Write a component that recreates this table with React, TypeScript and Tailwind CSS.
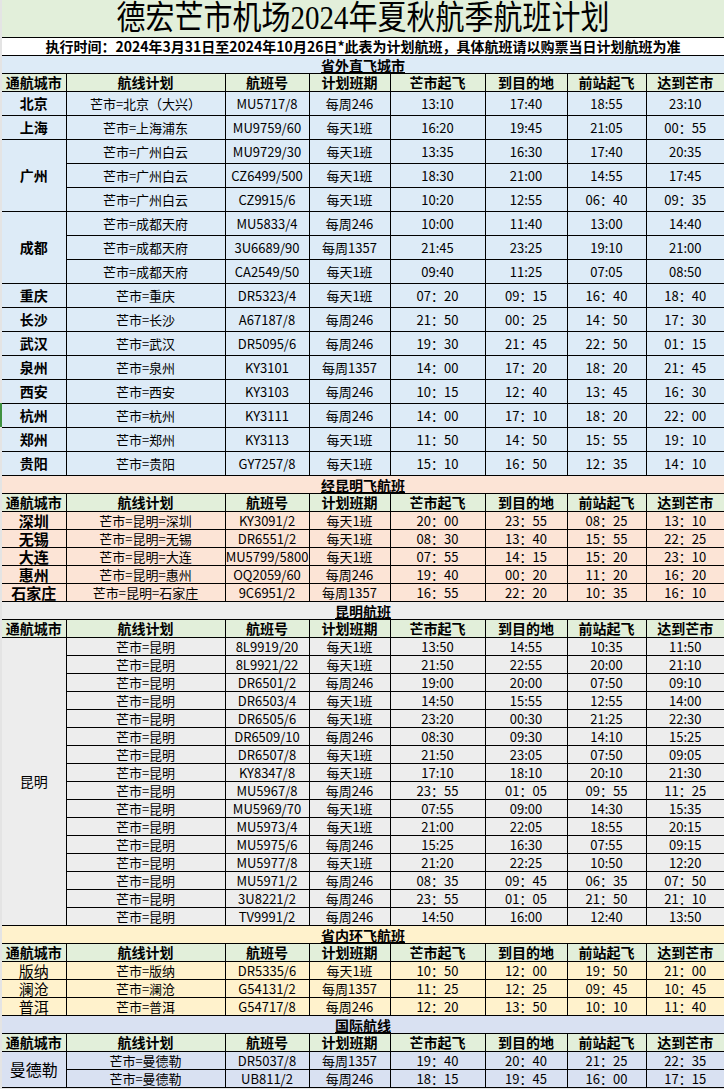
// flight schedule sheet, spreadsheet look
type Row = { route: string; flight: string; sched: string; t: string[] };
type Group = { city: string; rows: Row[]; mark?: boolean };
type Section = {
  title: string;
  bg: string;
  rowH: string;
  cityCls: string;
  groups: Group[];
};

const r = (route: string, flight: string, sched: string, t: string) => ({
  route,
  flight,
  sched,
  t: t.split(" "),
});

const sections: Section[] = [
  {
    title: "省外直飞城市",
    bg: "bg-[#ddebf7]",
    rowH: "h-[24px]",
    cityCls: "font-bold text-[14px]",
    groups: [
      { city: "北京", rows: [r("芒市=北京（大兴）", "MU5717/8", "每周246", "13:10 17:40 18:55 23:10")] },
      { city: "上海", rows: [r("芒市=上海浦东", "MU9759/60", "每天1班", "16:20 19:45 21:05 00：55")] },
      {
        city: "广州",
        rows: [
          r("芒市=广州白云", "MU9729/30", "每天1班", "13:35 16:30 17:40 20:35"),
          r("芒市=广州白云", "CZ6499/500", "每天1班", "18:30 21:00 14:55 17:45"),
          r("芒市=广州白云", "CZ9915/6", "每天1班", "10:20 12:55 06：40 09：35"),
        ],
      },
      {
        city: "成都",
        rows: [
          r("芒市=成都天府", "MU5833/4", "每周246", "10:00 11:40 13:00 14:40"),
          r("芒市=成都天府", "3U6689/90", "每周1357", "21:45 23:25 19:10 21:00"),
          r("芒市=成都天府", "CA2549/50", "每天1班", "09:40 11:25 07:05 08:50"),
        ],
      },
      { city: "重庆", rows: [r("芒市=重庆", "DR5323/4", "每天1班", "07：20 09：15 16：40 18：40")] },
      { city: "长沙", rows: [r("芒市=长沙", "A67187/8", "每周246", "21：50 00：25 14：50 17：30")] },
      { city: "武汉", rows: [r("芒市=武汉", "DR5095/6", "每周246", "19：30 21：45 22：50 01：15")] },
      { city: "泉州", rows: [r("芒市=泉州", "KY3101", "每周1357", "14：00 17：20 18：20 21：45")] },
      { city: "西安", rows: [r("芒市=西安", "KY3103", "每周246", "10：15 12：40 13：45 16：30")] },
      { city: "杭州", mark: true, rows: [r("芒市=杭州", "KY3111", "每周246", "14：00 17：10 18：20 22：00")] },
      { city: "郑州", rows: [r("芒市=郑州", "KY3113", "每天1班", "11：50 14：50 15：55 19：10")] },
      { city: "贵阳", rows: [r("芒市=贵阳", "GY7257/8", "每天1班", "15：10 16：50 12：35 14：10")] },
    ],
  },
  {
    title: "经昆明飞航班",
    bg: "bg-[#fce4d6]",
    rowH: "h-[18px]",
    cityCls: "font-bold text-[15px]",
    groups: [
      { city: "深圳", rows: [r("芒市=昆明=深圳", "KY3091/2", "每天1班", "20：00 23：55 08：25 13：10")] },
      { city: "无锡", rows: [r("芒市=昆明=无锡", "DR6551/2", "每天1班", "08：30 13：40 15：55 22：25")] },
      { city: "大连", rows: [r("芒市=昆明=大连", "MU5799/5800", "每天1班", "07：55 14：15 15：20 23：10")] },
      { city: "惠州", rows: [r("芒市=昆明=惠州", "OQ2059/60", "每周246", "19：40 00：20 11：20 16：20")] },
      { city: "石家庄", rows: [r("芒市=昆明=石家庄", "9C6951/2", "每周1357", "16：55 22：20 10：35 16：10")] },
    ],
  },
  {
    title: "昆明航班",
    bg: "bg-[#ededed]",
    rowH: "h-[18px]",
    cityCls: "text-[14px]",
    groups: [
      {
        city: "昆明",
        rows: [
          r("芒市=昆明", "8L9919/20", "每天1班", "13:50 14:55 10:35 11:50"),
          r("芒市=昆明", "8L9921/22", "每天1班", "21:50 22:55 20:00 21:10"),
          r("芒市=昆明", "DR6501/2", "每周246", "19:00 20:00 07:50 09:10"),
          r("芒市=昆明", "DR6503/4", "每天1班", "14:50 15:55 12:55 14:00"),
          r("芒市=昆明", "DR6505/6", "每天1班", "23:20 00:30 21:25 22:30"),
          r("芒市=昆明", "DR6509/10", "每周246", "08:30 09:30 14:10 15:25"),
          r("芒市=昆明", "DR6507/8", "每天1班", "21:50 23:05 07:50 09:05"),
          r("芒市=昆明", "KY8347/8", "每天1班", "17:10 18:10 20:10 21:30"),
          r("芒市=昆明", "MU5967/8", "每周246", "23：55 01：05 09：55 11：25"),
          r("芒市=昆明", "MU5969/70", "每天1班", "07:55 09:00 14:30 15:35"),
          r("芒市=昆明", "MU5973/4", "每天1班", "21:00 22:05 18:55 20:15"),
          r("芒市=昆明", "MU5975/6", "每周246", "15:25 16:30 07:55 09:15"),
          r("芒市=昆明", "MU5977/8", "每天1班", "21:20 22:25 10:50 12:20"),
          r("芒市=昆明", "MU5971/2", "每周246", "08：35 09：45 06：35 07：50"),
          r("芒市=昆明", "3U8221/2", "每周246", "23：55 01：05 21：50 21：10"),
          r("芒市=昆明", "TV9991/2", "每周246", "14:50 16:00 12:40 13:50"),
        ],
      },
    ],
  },
  {
    title: "省内环飞航班",
    bg: "bg-[#fff2cc]",
    rowH: "h-[18px]",
    cityCls: "text-[15px]",
    groups: [
      { city: "版纳", rows: [r("芒市=版纳", "DR5335/6", "每天1班", "10：50 12：00 19：50 21：00")] },
      { city: "澜沧", rows: [r("芒市=澜沧", "G54131/2", "每周1357", "11：25 12：25 09：45 10：45")] },
      { city: "普洱", rows: [r("芒市=普洱", "G54717/8", "每周246", "12：20 13：50 10：10 11：40")] },
    ],
  },
  {
    title: "国际航线",
    bg: "bg-[#d9e1f2]",
    rowH: "h-[18px]",
    cityCls: "text-[16px]",
    groups: [
      {
        city: "曼德勒",
        rows: [
          r("芒市=曼德勒", "DR5037/8", "每周1357", "19：40 20：40 21：25 22：35"),
          r("芒市=曼德勒", "UB811/2", "每周246", "18：15 19：45 16：00 17：15"),
        ],
      },
    ],
  },
];

const heads = ["通航城市", "航线计划", "航班号", "计划班期", "芒市起飞", "到目的地", "前站起飞", "达到芒市"];

const Gutter = ({ mark }: { mark?: boolean }) => (
  <td className={mark ? "p-0 bg-[#3f9140]" : "p-0 bg-[#e4e4e4]"} />
);

const cell = "border border-black p-0 text-center align-middle whitespace-nowrap overflow-hidden leading-none";

export default function App() {
  return (
    <div className="w-[724px] h-[1089px] bg-[#e4e4e4] text-black font-['Noto_Sans_CJK_SC',sans-serif] overflow-hidden">
      <table className="table-fixed border-collapse w-[724px]">
        <colgroup>
          <col className="w-[2px]" />
          <col className="w-[64px]" />
          <col className="w-[159px]" />
          <col className="w-[84px]" />
          <col className="w-[81px]" />
          <col className="w-[95px]" />
          <col className="w-[82px]" />
          <col className="w-[79px]" />
          <col className="w-[78px]" />
        </colgroup>
        <tbody>
          {/* title */}
          <tr className="h-[37px]">
            <Gutter />
            <td
              colSpan={8}
              className="bg-[#e2efda] border-b border-black p-0 text-center leading-none overflow-hidden text-[29px] font-['Liberation_Serif','Noto_Sans_CJK_SC',serif]"
            >
              <span className="inline-block scale-y-115">德宏芒市机场2024年夏秋航季航班计划</span>
            </td>
          </tr>
          <tr className="h-[18px]">
            <Gutter />
            <td colSpan={8} className="bg-white p-0 text-center leading-none text-[14px] font-bold">
              执行时间：2024年3月31日至2024年10月26日*此表为计划航班，具体航班请以购票当日计划航班为准
            </td>
          </tr>

          {sections.map((s) => (
            <SectionRows key={s.title} s={s} />
          ))}
        </tbody>
      </table>
    </div>
  );
}

function SectionRows({ s }: { s: Section }) {
  return (
    <>
      <tr className="h-[18px]">
        <Gutter />
        <td colSpan={8} className={`${s.bg} border-y border-black p-0 text-center leading-none overflow-hidden`}>
          <span className="text-[14px] font-bold underline underline-offset-1">{s.title}</span>
        </td>
      </tr>
      <tr className="h-[18px]">
        <Gutter />
        {heads.map((h, i) => (
          <td
            key={h}
            className={`${cell} bg-[#e2efda] text-[14px] font-bold ${i === 0 ? "border-l-0" : ""} ${i === 7 ? "border-r-0" : ""}`}
          >
            {h}
          </td>
        ))}
      </tr>
      {s.groups.map((g) =>
        g.rows.map((row, j) => (
          <tr key={g.city + row.flight} className={s.rowH}>
            <Gutter mark={g.mark} />
            {j === 0 && (
              <td rowSpan={g.rows.length} className={`${cell} ${s.bg} ${s.cityCls} border-l-0`}>
                {g.city}
              </td>
            )}
            <td className={`${cell} ${s.bg} text-[13px]`}>{row.route}</td>
            <td className={`${cell} ${s.bg} text-[13px]`}>{row.flight}</td>
            <td className={`${cell} ${s.bg} text-[13px]`}>{row.sched}</td>
            {row.t.map((t, k) => (
              <td key={k} className={`${cell} ${s.bg} text-[13px] ${k === 3 ? "border-r-0" : ""}`}>
                {t}
              </td>
            ))}
          </tr>
        ))
      )}
    </>
  );
}
